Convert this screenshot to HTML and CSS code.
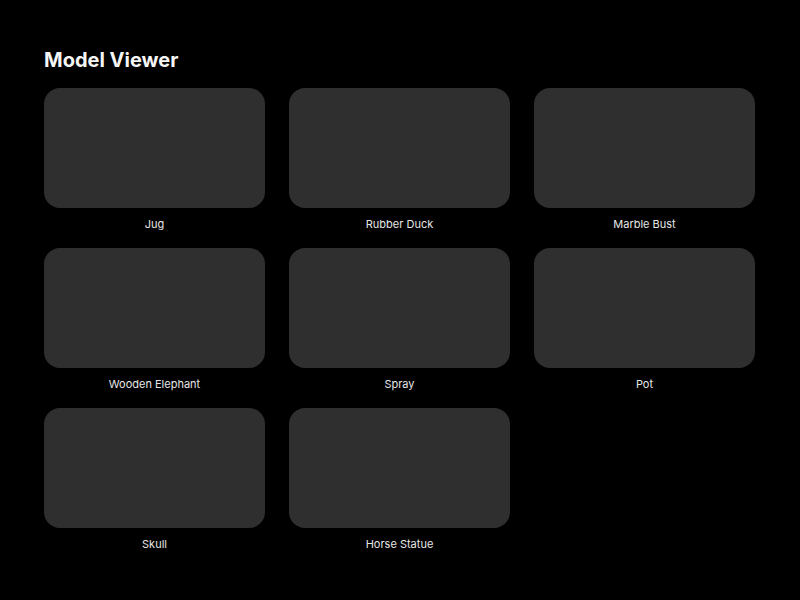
FILE: index.html
```html
<!DOCTYPE html>
<html>
<head>
<meta charset="utf-8">
<link rel="stylesheet" href="styles.css">
</head>
<body>
<div class="page">
  <h1 class="title">Model Viewer</h1>
  <div class="grid">
    <div class="item"><div class="thumb"></div><div class="label">Jug</div></div>
    <div class="item"><div class="thumb"></div><div class="label">Rubber Duck</div></div>
    <div class="item"><div class="thumb"></div><div class="label">Marble Bust</div></div>
    <div class="item"><div class="thumb"></div><div class="label">Wooden Elephant</div></div>
    <div class="item"><div class="thumb"></div><div class="label">Spray</div></div>
    <div class="item"><div class="thumb"></div><div class="label">Pot</div></div>
    <div class="item"><div class="thumb"></div><div class="label">Skull</div></div>
    <div class="item"><div class="thumb"></div><div class="label">Horse Statue</div></div>
  </div>
</div>
</body>
</html>
```
FILE: styles.css
```css
html, body {
  margin: 0;
  padding: 0;
  background: #000;
  height: 100%;
}
body {
  font-family: Inter, "Liberation Sans", sans-serif;
  color: #fff;
}
.page {
  padding: 48px 45px 0 44px;
}
.title {
  margin: 0 0 16px 0;
  font-size: 20px;
  line-height: 24px;
  font-weight: 700;
  color: #f5f5f5;
}
.grid {
  display: grid;
  grid-template-columns: repeat(3, 1fr);
  column-gap: 24px;
  row-gap: 16px;
}
.item {
  display: flex;
  flex-direction: column;
}
.thumb {
  height: 120px;
  background: #2f2f2f;
  border-radius: 16px;
}
.label {
  margin-top: 8px;
  font-size: 11px;
  line-height: 16px;
  text-align: center;
  color: #e6e6e6;
}
```
